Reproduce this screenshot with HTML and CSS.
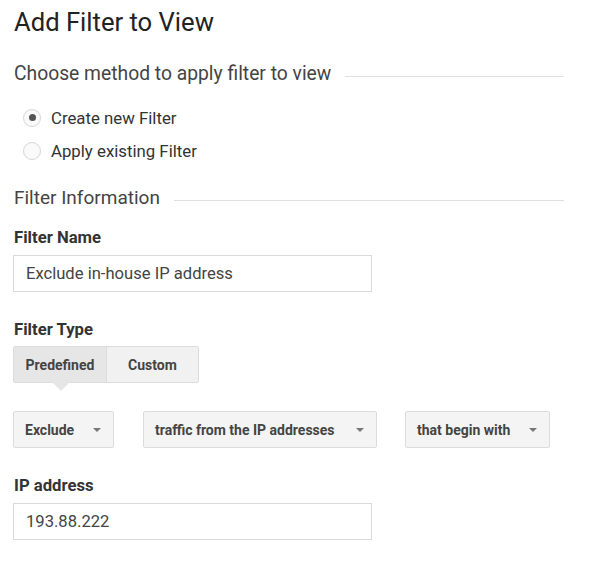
FILE: index.html
```html
<!DOCTYPE html>
<html lang="en">
<head>
    <meta charset="UTF-8">
    <title>Add Filter to View</title>
    <link rel="stylesheet" href="styles.css">
</head>
<body>
    <div class="panel">
        <h1>Add Filter to View</h1>

        <div class="section-head">
            <span>Choose method to apply filter to view</span>
            <span class="rule"></span>
        </div>

        <div class="radio-list">
            <label class="radio-row">
                <span class="radio checked"></span>
                Create new Filter
            </label>
            <label class="radio-row">
                <span class="radio"></span>
                Apply existing Filter
            </label>
        </div>

        <div class="section-head info">
            <span>Filter Information</span>
            <span class="rule"></span>
        </div>

        <div class="field first">
            <div class="field-label">Filter Name</div>
            <div class="text-box">Exclude in-house IP address</div>
        </div>

        <div class="field">
            <div class="field-label">Filter Type</div>
            <div class="segmented">
                <div class="seg active">Predefined</div>
                <div class="seg">Custom</div>
            </div>
        </div>

        <div class="select-row">
            <div class="select w-exclude">Exclude <span class="caret"></span></div>
            <div class="select w-traffic">traffic from the IP addresses <span class="caret"></span></div>
            <div class="select w-begin">that begin with <span class="caret"></span></div>
        </div>

        <div class="field">
            <div class="field-label">IP address</div>
            <div class="text-box">193.88.222</div>
        </div>
    </div>
</body>
</html>
```

FILE: styles.css
```css
body {
    margin: 0;
    background: #fff;
    font-family: Roboto, "Liberation Sans", sans-serif;
    color: #333;
}

.panel {
    width: 550px;
    padding: 6px 0 0 14px;
}

h1 {
    margin: 0;
    font-size: 25.6px;
    font-weight: 400;
    color: #222;
    line-height: 32px;
}

.section-head {
    display: flex;
    align-items: center;
    gap: 14px;
    margin-top: 24px;
    font-size: 19.3px;
    color: #444;
    line-height: 24px;
}

.section-head .rule {
    flex: 1;
    height: 1px;
    background: #e0e0e0;
    margin-top: 4px;
}

.section-head.info {
    margin-top: 19px;
}

.section-head.info span:first-child {
    font-size: 19px;
}

.radio-list {
    margin-top: 15px;
    padding-left: 9px;
}

.radio-row {
    display: flex;
    align-items: center;
    gap: 10px;
    height: 33px;
    font-size: 16.8px;
    color: #333;
}

.radio-row:last-child {
    margin-bottom: 1px;
}

.radio {
    width: 16px;
    height: 16px;
    border: 1px solid #d6d6d6;
    border-radius: 50%;
    background: #fafafa;
    position: relative;
}

.radio.checked::after {
    content: "";
    position: absolute;
    left: 4.5px;
    top: 4.5px;
    width: 7px;
    height: 7px;
    border-radius: 50%;
    background: #555;
}

.field {
    margin-top: 27px;
}

.field.first {
    margin-top: 17px;
}

.field-label {
    font-size: 16.7px;
    font-weight: 700;
    color: #333;
    line-height: 22px;
    margin-bottom: 6px;
}

.text-box {
    width: 345px;
    height: 35px;
    margin-left: -1px;
    border: 1px solid #d9d9d9;
    padding-left: 12px;
    font-size: 16.6px;
    line-height: 35px;
    color: #444;
}

.segmented {
    display: inline-flex;
    margin: -1px 0 0 -1px;
    border: 1px solid #dcdcdc;
    border-radius: 2px;
    height: 35px;
    background: #f1f1f1;
}

.seg {
    display: flex;
    align-items: center;
    justify-content: center;
    width: 91px;
    font-size: 14px;
    font-weight: 700;
    color: #444;
}

.seg + .seg {
    border-left: 1px solid #dcdcdc;
}

.seg.active {
    position: relative;
    width: 92px;
    background: #e6e6e6;
}

/* little pointer under the selected type */
.seg.active::after {
    content: "";
    position: absolute;
    left: 38px;
    bottom: -9px;
    border-left: 9px solid transparent;
    border-right: 9px solid transparent;
    border-top: 9px solid #e6e6e6;
}

.select-row {
    display: flex;
    margin-top: 28px;
    margin-left: -1px;
}

.select {
    display: flex;
    align-items: center;
    justify-content: space-between;
    box-sizing: border-box;
    height: 37px;
    padding: 0 12px 0 11px;
    border: 1px solid #dcdcdc;
    border-radius: 2px;
    background: #f4f4f4;
    font-size: 14px;
    font-weight: 700;
    color: #444;
}

.w-exclude { width: 101px; margin-right: 29px; }
.w-traffic { width: 234px; margin-right: 28px; }
.w-begin { width: 145px; }

.caret {
    width: 0;
    height: 0;
    border-left: 4.5px solid transparent;
    border-right: 4.5px solid transparent;
    border-top: 4.5px solid #777;
}
```
